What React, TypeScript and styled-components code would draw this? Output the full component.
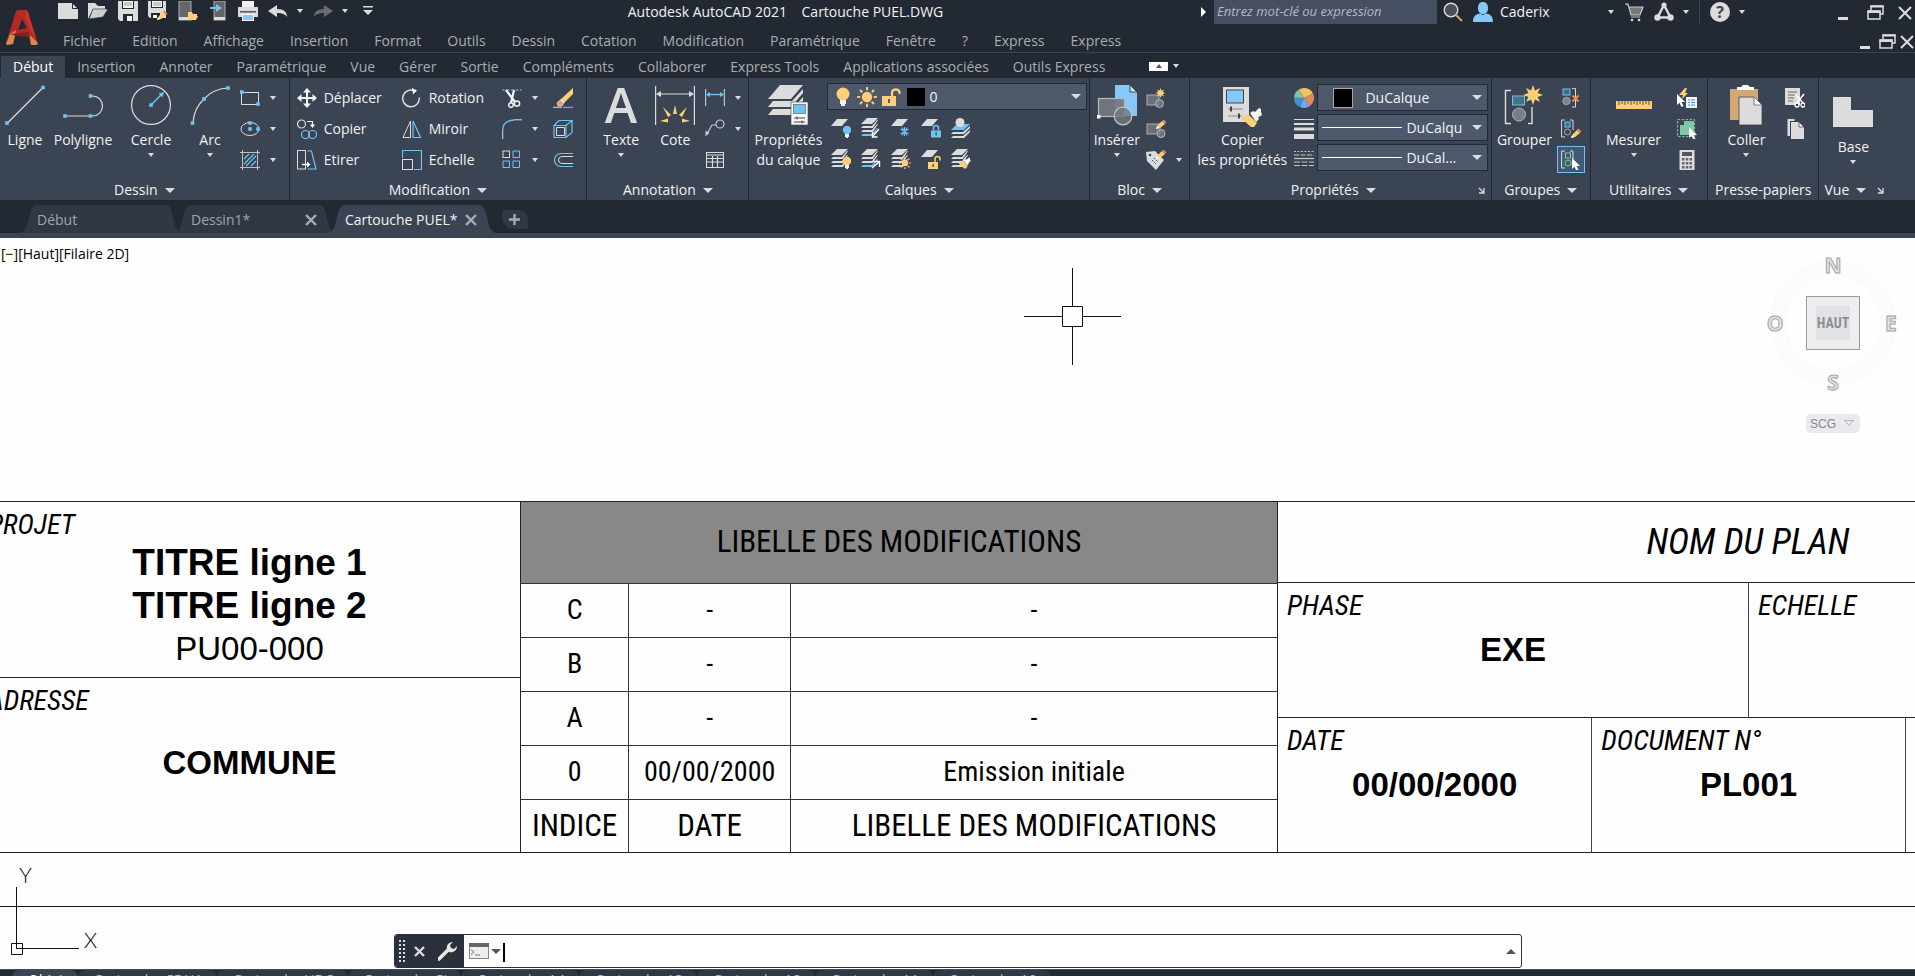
import React from "react";
import styled, { createGlobalStyle, css } from "styled-components";

const c = {
  dark: "#222932",
  ribbon: "#3b4453",
  tab: "#303845",
  field: "#4d586b",
  light: "#dcdcdc",
  blue: "#6fc3f3",
  sky: "#86c8f8",
  yellow: "#ffcf78",
  orange: "#e58a55",
  green: "#7fc8a4",
};

const Global = createGlobalStyle`
  * { box-sizing: border-box; }
  body { margin: 0; background: #fefefe; overflow: hidden; }
  button, input, select { font: inherit; color: inherit; background: none; border: 0; padding: 0; margin: 0; outline: none; }
`;

/* ---------- drawings ---------- */

const Dot = ({ x, y }: { x: number; y: number }) => (
  <rect x={x - 1.8} y={y - 1.8} width="3.6" height="3.6" fill={c.blue} />
);
const Sheet = ({ x, y, fill = c.light }: { x: number; y: number; fill?: string }) => (
  <path d={`M${x + 6} ${y}h11l-6 7H${x}z`} fill={fill} />
);
const Stack = ({ bottom = c.light }: { bottom?: string }) => (
  <>
    <path d="M6 0h11l-6 6H0z" fill={c.light} />
    <path d="M2 8h9l5-6h1l-5 8H0z" fill={c.light} />
    <path d="M2 12h9l5-6h1l-5 8H0z" fill={c.light} />
    <path d="M2 16h9l5-6h1l-5 8H0z" fill={bottom} />
  </>
);
const Bulb = ({ x, y, fill = c.yellow }: { x: number; y: number; fill?: string }) => (
  <>
    <circle cx={x} cy={y} r="4.2" fill={fill} />
    <path d={`M${x - 2} ${y + 4}h4v3h-1v1.5h-2v-1.500h-1z`} fill="#f2f2f2" />
  </>
);
const Pencil = ({ x, y, k = 1 }: { x: number; y: number; k?: number }) => (
  <g transform={`translate(${x} ${y}) scale(${k})`}>
    <path d="M0 9l2-4 4-4 3 3-5 4z" fill={c.yellow} />
    <path d="M6 1l1.500-1.500 3 3L9 4z" fill={c.orange} />
    <path d="M0 9l1-3 2 2z" fill="#fff" />
  </g>
);
const Pointer = ({ x, y }: { x: number; y: number }) => (
  <path d={`M${x} ${y}v11l2.500-2.200 2 4.200 2-1-2-4h3.500z`} fill="#fff" />
);
const Star = ({ x, y, r }: { x: number; y: number; r: number }) => {
  const pts = Array.from({ length: 16 }, (_, i) => {
    const a = (i * Math.PI) / 8;
    const q = i % 2 ? r * 0.5 : r;
    return `${x + q * Math.sin(a)},${y - q * Math.cos(a)}`;
  }).join(" ");
  return <polygon points={pts} fill={c.yellow} />;
};
const Sun = ({ x, y, r }: { x: number; y: number; r: number }) => (
  <>
    <circle cx={x} cy={y} r={r * 0.6} fill={c.yellow} />
    {Array.from({ length: 8 }, (_, i) => (
      <line key={i} x1={x} x2={x} y1={y - r * 1.15} y2={y - r * 0.78} stroke={c.yellow} strokeWidth={r * 0.22} transform={`rotate(${i * 45} ${x} ${y})`} />
    ))}
  </>
);
const Padlock = ({ x, y, fill, open }: { x: number; y: number; fill: string; open?: boolean }) => (
  <>
    <rect x={x} y={y} width="10" height="7" fill={fill} />
    <path d={open ? `M${x + 7} ${y}v-3a2.500 2.500 0 0 1 5 0v1.500` : `M${x + 2.5} ${y}v-2.500a2.500 2.500 0 0 1 5 0v2.500`} fill="none" stroke={fill} strokeWidth="1.500" />
    <rect x={x + 4.5} y={y + 2} width="1.300" height="3" fill={c.ribbon} />
  </>
);
const Brush = ({ x, y, k = 1 }: { x: number; y: number; k?: number }) => (
  <g transform={`translate(${x} ${y}) scale(${k})`}>
    <path d="M8 4l3-2 2 1 4-4 2 1v3l1 2-1 2-3 1 1 2-3 3z" fill="#f4f4f4" />
    <path d="M-1 9l7-4 9 9-3 4h-3z" fill={c.yellow} />
  </g>
);

const glyphs: Record<string, React.ReactNode> = {
  /* quick access bar */
  new: <><path d="M0 2h14l6 6v10H0z" fill={c.light} /><path d="M14.500 2v5.500H20" fill="none" stroke={c.dark} /></>,
  open: <><path d="M0 18V2h7l3 3h7v3H5z" fill={c.light} /><path d="M5 8h15l-5 8-14 2z" fill="#cfcfcf" stroke={c.dark} strokeWidth=".6" /></>,
  save: <><path d="M0 0h20v20H2l-2-2z" fill={c.light} /><path d="M4 0h12v8H4zM5 13h10v7H5z" fill={c.dark} /><path d="M5 0h10v7H5zM9 15h5v5H9z" fill="#f4f4f4" /><path d="M6 2h8M6 4h8" stroke="#888" strokeWidth=".8" /></>,
  saveas: <><path d="M0 0h18v17H2l-2-2z" fill={c.light} /><path d="M3 0h12v7H3zM3 12h9v5H3z" fill={c.dark} /><path d="M4 0h10v6H4zM5 14h4v3H5z" fill="#f4f4f4" /><path d="M5 2h8M5 4h8" stroke="#888" strokeWidth=".8" /><Pencil x={9} y={10} /></>,
  openm: <><rect x="1" width="12" height="19" fill="#666" stroke="#aaa" /><rect x="1" y="16" width="12" height="3" fill={c.light} /><path d="M10 19v-8h4l1 2h4v2h1l-2 4z" fill={c.yellow} /></>,
  savem: <><rect x="6" width="11" height="19" fill="#666" stroke="#aaa" /><rect x="6" y="16" width="11" height="3" fill={c.light} /><path d="M2 6h6V3l6 4-6 4V8H2z" fill={c.blue} /></>,
  print: <><path d="M4 0h12v6H4z" fill="#f2f2f2" /><path d="M0 6h20v10H0z" fill={c.light} /><path d="M2 10h16v1.500H2z" fill="#555" /><path d="M4 13h12v7H4z" fill="#f5f5f5" /><path d="M5 14h10v5H5z" fill={c.sky} /></>,
  undo: <path d="M0 10l9-6v4c7 0 10 3 10 8-2-3-5-4-10-4v4z" fill={c.light} />,
  redo: <path d="M20 10l-9-6v4C4 8 1 11 1 16c2-3 5-4 10-4v4z" fill="#6b6d70" />,
  more: <><path d="M5 5h10v1.500H5z" fill={c.light} /><path d="M5 9h10l-5 5z" fill={c.light} /></>,
  search: <><circle cx="8" cy="8" r="6.800" fill="#4c5054" stroke={c.light} strokeWidth="1.400" /><path d="M13 13l6 6" stroke="#d9a066" strokeWidth="2" /></>,
  user: <><path d="M10 0c3 0 5 2 5 6s-2 6-5 6-5-2-5-6 2-6 5-6z" fill={c.sky} /><path d="M0 20c0-6 3-8 7-8.500l3 1.500 3-1.500c4 .5 7 2.500 7 8.500z" fill={c.sky} /></>,
  cart: <><path d="M1 2h3l3 11h9l3-8H5" fill="#777" stroke="#c9c9c9" strokeWidth="1.200" /><path d="M7 15h9" stroke="#c9c9c9" /><circle cx="8" cy="18" r="1.300" fill={c.light} /><circle cx="15" cy="18" r="1.300" fill={c.light} /></>,
  tri: <><path d="M10 3L3.500 15.500h13z" fill="none" stroke={c.light} strokeWidth="2.400" /><circle cx="10" cy="3" r="2.600" fill={c.light} /><circle cx="3.500" cy="15.500" r="3.200" fill={c.light} /><circle cx="16.500" cy="15.500" r="3.200" fill={c.light} /></>,
  min: <path d="M3 15h10v3H3z" fill={c.light} />,
  restore: <><path d="M6 8V4h12v8h-3" fill="none" stroke={c.light} strokeWidth="1.500" /><path d="M5.500 3.500H18.500v2H5.500z" fill={c.light} /><rect x="3" y="9" width="12" height="8" fill="none" stroke={c.light} strokeWidth="1.500" /><path d="M2.500 8.500h13v2.500h-13z" fill={c.light} /></>,
  close: <path d="M4 5l12 12M16 5L4 17" stroke={c.light} strokeWidth="2" />,
  /* draw */
  rect: <><rect x="1.500" y="4.500" width="17" height="12" fill="none" stroke={c.light} /><Dot x={1.8} y={4} /><Dot x={18} y={16} /></>,
  ellipse: <><ellipse cx="10" cy="10" rx="9" ry="6.500" fill="none" stroke={c.light} /><Dot x={10} y={4} /><Dot x={10} y={10} /><Dot x={18} y={10} /></>,
  hatch: <><path d="M0 2.500h20M0 17.500h20M2.500 0v20M17.500 0v20" stroke="#c0c0c0" /><path d="M4 9l5-5M4 14L14 4M6 16L16 6M11 16l5-5" stroke={c.blue} strokeWidth="1.200" /></>,
  /* modify */
  move: <><path d="M10 3v14M3 10h14" stroke="#f4f4f4" strokeWidth="2" /><path d="M10 0l4 4.500H6zM10 20l4-4.500H6zM0 10l4.500-4v8zM20 10l-4.500-4v8z" fill="#f4f4f4" /></>,
  rotate: <><path d="M11 2.500A8.300 8.300 0 1 0 17 8" fill="none" stroke={c.light} strokeWidth="1.500" transform="rotate(12 10 10)" /><path d="M10 0l5 2.500-4 4z" fill="#fff" /></>,
  copy: <><circle cx="4.500" cy="5" r="4" fill="none" stroke={c.light} strokeWidth="1.200" /><path d="M10 2.500h5.500V6" fill="none" stroke="#fff" strokeWidth="1.200" /><path d="M13 5.500h5l-2.500 3.500z" fill="#fff" /><circle cx="8.500" cy="15.500" r="4" fill="none" stroke={c.blue} strokeWidth="1.200" /><circle cx="15.500" cy="15.500" r="4" fill="none" stroke={c.blue} strokeWidth="1.200" /></>,
  mirror: <><path d="M8.500 2v16.500H1z" fill="none" stroke={c.light} /><path d="M11 2v16.500h7.500z" fill="none" stroke={c.blue} strokeWidth="1.200" /></>,
  stretch: <><rect x=".5" y=".5" width="8" height="18.500" fill="none" stroke={c.light} /><path d="M10.500 1h4l4.500 18h-8.500" fill="none" stroke={c.blue} strokeWidth="1.200" /><path d="M5 14.500h6" stroke="#fff" strokeWidth="1.400" /><path d="M10 11.500l3.500 3-3.500 3z" fill="#fff" /></>,
  scale: <><path d="M.5 8V.500h19v19H12" fill="none" stroke={c.blue} strokeWidth="1.200" /><rect x=".5" y="9.500" width="10" height="10" fill="none" stroke={c.light} /></>,
  trim: <><path d="M0 2h20" stroke={c.blue} strokeWidth="1" strokeDasharray="3 1.500" /><path d="M4 2l9 12M12 2L9 15" stroke="#f4f4f4" strokeWidth="2.200" /><circle cx="15" cy="15.500" r="2.600" fill="none" stroke="#f4f4f4" strokeWidth="1.500" /><circle cx="9" cy="17" r="2.300" fill="none" stroke="#f4f4f4" strokeWidth="1.500" /></>,
  fillet: <><path d="M.8 11C.8 5 4 1.500 12 1" fill="none" stroke={c.blue} strokeWidth="1.300" /><path d="M12 .8h8M.7 11v9" stroke={c.light} /></>,
  array: <><rect x="1" y="1" width="6.500" height="6.500" fill="none" stroke={c.light} /><path d="M11 1h6.500v6.500H11zM1 11h6.500v6.500H1zM11 11h6.500v6.500H11z" fill="none" stroke={c.blue} /></>,
  erase: <><path d="M20 0v6l-8 8-4-3z" fill={c.yellow} /><path d="M8 11l4 3-1 1-4-3z" fill="#fff" /><path d="M7 12l4 3-2 3H5l-1-3z" fill="#e9976f" stroke="#fff" strokeWidth=".6" /><path d="M0 19.300h9" stroke={c.light} /><path d="M10 19.300h10" stroke={c.blue} /></>,
  explode: <><path d="M1 6.500h12v12H1zM1 6.500l5-5h13l-6 5M19 1.500v12l-6 5" fill="none" stroke={c.blue} strokeWidth="1.200" /><path d="M3.500 8.500h8v8h-8z" fill="none" stroke={c.light} /></>,
  offset: <><path d="M20 3.500H8a6.500 6.500 0 0 0 0 13h12" fill="none" stroke={c.blue} strokeWidth="1.200" /><path d="M20 6.500H9a3.500 3.500 0 0 0 0 7h11" fill="none" stroke={c.light} /></>,
  /* annotation */
  linear: <><path d="M.7 1v17M19.300 1v17" stroke={c.light} /><path d="M2 6.500h16" stroke={c.blue} strokeWidth="1.400" /><path d="M1 6.500l4-2.500v5zM19 6.500L15 4v5z" fill={c.blue} /></>,
  leader: <><circle cx="15" cy="5" r="4" fill="none" stroke="#c8c8c8" strokeWidth="1.200" /><path d="M11 6H7L2 15" fill="none" stroke="#c8c8c8" strokeWidth="1.200" /><path d="M.5 17.500v-6l4 2.500z" fill="#c8c8c8" /></>,
  table: <><rect x="1.500" y="2.500" width="17" height="15" fill="none" stroke={c.light} /><path d="M2 5h16M2 8.500h16M2 12h16M7.500 6v11M12.500 6v11" stroke={c.light} strokeWidth="1.200" /></>,
  /* layers */
  lOff: <><Sheet x={0} y={1} /><Bulb x={16} y={12} fill={c.blue} /></>,
  lIso: <><Stack bottom={c.blue} /><path d="M18 11l-6 7M11.500 14v5h5" fill="none" stroke="#fff" strokeWidth="1.400" /></>,
  lFreeze: <><Sheet x={0} y={1} /><path d="M13.500 9v9M9.500 11l8 5M17.500 11l-8 5M11 9.500l5 8M16 9.500l-5 8" stroke={c.blue} strokeWidth="1.100" /></>,
  lLock: <><Sheet x={0} y={1} /><Padlock x={10} y={12.5} fill={c.blue} /></>,
  lMake: <><path d="M6 6h13l-6 6H0z" fill={c.blue} /><circle cx="9" cy="4.500" r="4.500" fill={c.light} /><path d="M2 14h10l7-6v2l-6 6H0zM2 18h10l7-6v2l-6 6H0z" fill={c.light} /></>,
  lOn: <><Stack /><Bulb x={16} y={12} /></>,
  lUniso: <><Stack bottom={c.blue} /><path d="M11 19l7-6M13 12.500h5.500V18" fill="none" stroke="#fff" strokeWidth="1.400" /></>,
  lThaw: <><Stack /><Sun x={14} y={14} r={5.4} /></>,
  lUnlock: <><Sheet x={0} y={1} /><Padlock x={7} y={13} fill={c.yellow} open /></>,
  lMatch: <><Stack /><Brush x={8} y={9} k={0.58} /></>,
  bulbBig: <><circle cx="10" cy="7" r="6.500" fill={c.yellow} /><path d="M7 13h6v4h-1v2H8v-2H7z" fill="#f2f2f2" /></>,
  sun: <Sun x={10} y={10} r={8.6} />,
  unlock: <><path d="M1 9h14v10H1z" fill={c.yellow} /><path d="M11 9V5a4 4 0 0 1 7.500 0v2" fill="none" stroke={c.yellow} strokeWidth="2.200" /><path d="M7 12h2v4H7z" fill={c.field} /></>,
  /* block */
  blkNew: <><rect x="1" y="7" width="12" height="10" fill="#6b6f78" stroke="#aeb0b4" /><circle cx="13.500" cy="15.500" r="4" fill="#7a7e86" fillOpacity=".8" stroke="#b8b8b8" /><Star x={14.5} y={5} r={5} /></>,
  blkEdit: <><rect x="1" y="5" width="13" height="10" fill="#6b6f78" stroke="#aeb0b4" /><circle cx="15" cy="14.500" r="4" fill="#7a7e86" fillOpacity=".8" stroke="#b8b8b8" /><Pencil x={10} y={1} /></>,
  blkAttr: <><path d="M0 2l9-1 9 9-8 10L1 11z" fill={c.light} /><circle cx="4" cy="5" r="1.300" fill={c.ribbon} /><path d="M6 10l4 4M8 8l4 4" stroke={c.ribbon} strokeDasharray="1.500 1" /><Pencil x={10} y={0} /></>,
  /* properties */
  wheel: <><path d="M10 10V0a10 10 0 0 1 9 5.500z" fill="#f2c063" /><path d="M10 10l9-4.500a10 10 0 0 1-3.500 12.800z" fill="#e2875a" /><path d="M10 10l5.500 8.300a10 10 0 0 1-9.500.7z" fill="#74a7ee" /><path d="M10 10l-4 9A10 10 0 0 1 0 9.500z" fill="#3f93cf" /><path d="M10 10L0 9.500A10 10 0 0 1 5 1.500z" fill="#7ec5a3" /><path d="M10 10L5 1.500A10 10 0 0 1 10 0z" fill="#f2c063" /></>,
  weights: <path d="M0 0h20v1H0zM0 4h20v2H0zM0 8.500h20v3H0zM0 15h20v5H0z" fill={c.light} />,
  types: <><path d="M0 1.500h20" stroke="#c4c4c4" strokeDasharray="2 1.500" /><path d="M0 5h20" stroke="#c4c4c4" strokeDasharray="5 1.500" /><path d="M0 8.500h20" stroke="#c4c4c4" strokeWidth="1.300" /><path d="M0 12h20M0 15.500h20" stroke="#c4c4c4" strokeDasharray="6 1.500" /></>,
  /* groups */
  ungroup: <><rect x="2" y="1" width="7" height="6" fill="#3e6d85" stroke={c.blue} /><circle cx="5.500" cy="13" r="3.700" fill="#7d8088" stroke="#a9a9a9" /><path d="M11 .600h3.500V19H11" fill="none" stroke={c.light} /><path d="M11.500 7.500l6 6M17.500 7.500l-6 6" stroke={c.orange} strokeWidth="2" /></>,
  grpEdit: <><path d="M4 1H.600v17H4M9 1h3v10" fill="none" stroke={c.light} /><rect x="4" y="3" width="5" height="5" fill="#3e6d85" stroke={c.blue} /><circle cx="6.500" cy="13" r="3" fill="none" stroke="#a9a9a9" /><Pencil x={10} y={10} /></>,
  grpSel: <><path d="M4 1H.600v17H4M9 1h3v8" fill="none" stroke={c.light} /><rect x="4.500" y="3" width="5" height="5" fill="none" stroke={c.green} /><circle cx="7" cy="13" r="3" fill="none" stroke={c.green} /><Pointer x={11} y={8} /></>,
  /* utilities */
  quick: <><path d="M8 0L2 7h4l-1 4 6-6H8l2-5z" fill={c.yellow} /><Pointer x={0} y={6} /><rect x="9" y="9" width="11" height="11" fill="#f4f4f4" /><path d="M11 12h2M14 12h4M11 14.500h2M14 14.500h4M11 17h2M14 17h4" stroke="#3f93cf" strokeWidth="1.200" /></>,
  selAll: <><rect x=".6" y=".6" width="17" height="17" fill="none" stroke={c.green} strokeDasharray="2.500 1.500" /><path d="M3 6h4V2h10v10h-4v4H3z" fill={c.green} /><Pointer x={12} y={8} /></>,
  calc: <><rect x="2.500" width="15" height="20" fill={c.light} /><path d="M5 2h10v4H5z" fill="#555" /><path d="M5 8h2.500v2.500H5zM8.800 8h2.500v2.500H8.800zM12.500 8H15v2.500h-2.500zM5 12h2.500v2.500H5zM8.800 12h2.500v2.500H8.800zM12.500 12H15v2.500h-2.500zM5 16h2.500v2.500H5zM8.800 16h2.500v2.500H8.800zM12.500 16H15v2.500h-2.500z" fill="#666" /></>,
  cut: <><path d="M0 0h15v17H0z" fill={c.light} /><path d="M3 4h9M3 7h9M3 10h6M3 13h5" stroke="#666" /><path d="M10 6l8 9M19 6l-7 9" stroke="#fff" strokeWidth="1.600" /><circle cx="12" cy="17" r="2" fill={c.ribbon} stroke="#fff" strokeWidth="1.300" /><circle cx="18" cy="17" r="2" fill={c.ribbon} stroke="#fff" strokeWidth="1.300" /></>,
  copyClip: <><path d="M2.500 0h7v2H5v15H2.500z" fill={c.light} /><path d="M6 3h8l5 5v12H6z" fill={c.light} /><path d="M14 3v5h5z" fill="#fff" stroke={c.ribbon} strokeWidth=".8" /></>,
};

const bigGlyphs: Record<string, React.ReactNode> = {
  ligne: <><path d="M1.500 39L38 2.500" stroke={c.light} strokeWidth="1.200" /><Dot x={2} y={38} /><Dot x={38} y={2.5} /></>,
  polyligne: <><path d="M1.500 31H29.500A10 10 0 0 0 29.500 11H27" fill="none" stroke={c.light} strokeWidth="1.200" /><Dot x={2} y={31} /><Dot x={27.5} y={31} /><Dot x={27.5} y={11} /></>,
  cercle: <><circle cx="20" cy="20" r="19.400" fill="none" stroke={c.light} strokeWidth="1.200" /><path d="M20 20l10-10" stroke={c.blue} strokeWidth="1.500" /><path d="M33 7l-1.500 5.500-4-4z" fill={c.blue} /><Dot x={20} y={20} /></>,
  arc: <><path d="M3 38Q4 23 14 14Q23 4 37.500 3" fill="none" stroke={c.light} strokeWidth="1.200" /><Dot x={2.5} y={38} /><Dot x={14} y={14} /><Dot x={38} y={3} /></>,
  texte: <text x="20" y="38" fontSize="49" fontWeight="600" textAnchor="middle" fill={c.light}>A</text>,
  cote: <><path d="M.600 1v39M39.400 1v39" stroke={c.light} strokeWidth="1.200" /><path d="M2 9h36" stroke={c.light} /><path d="M1 9l5-3v6zM39 9l-5-3v6z" fill={c.light} /><path d="M20 20l2 9h-4zM8 22l8 8-3 2zM32 22l-8 8 3 2zM5 36l8-2.500v4zM35 36l-8-2.500v4z" fill={c.yellow} /></>,
  calques: <><path d="M12 0h23L23 14H0z" fill={c.light} /><path d="M5 16h19L35 4v4L23 22H0z" fill={c.light} /><path d="M5 24h19l11-12v4L23 30H0z" fill={c.light} /><rect x="23" y="17" width="17" height="23" fill="#f6f6f6" stroke={c.ribbon} strokeWidth=".6" /><rect x="25.500" y="19.500" width="12" height="9" fill={c.blue} stroke="#555" strokeWidth=".6" /><path d="M26 33h11M26 37h11M29 31.500v3M34 35.500v3" stroke="#444" /></>,
  inserer: <><path d="M18 0h15l7 7v24H18z" fill={c.sky} /><path d="M33 0v7h7z" fill="#c9ecf0" stroke={c.ribbon} /><rect x="1.500" y="13.500" width="26" height="18" fill="#747880" fillOpacity=".93" stroke="#b8b8b8" strokeWidth="1.200" /><circle cx="26" cy="31" r="8.800" fill="#747880" fillOpacity=".8" stroke="#c4c4c4" strokeWidth="1.200" /><rect y="30" width="3.500" height="3.500" fill="#fff" /></>,
  copierProps: <><rect x="1" y="2" width="26" height="35" fill={c.light} /><rect x="4.500" y="5" width="17" height="13" fill={c.sky} stroke="#444" /><path d="M6 24h15M6 31h14" stroke="#888" /><path d="M9 21.500v5M17 28.500v5" stroke="#444" strokeWidth="2" /><Brush x={20} y={24} /></>,
  grouper: <><path d="M7 5.500H1.500v33H7M24 38.500h4V22" fill="none" stroke={c.light} strokeWidth="1.400" /><rect x="8.500" y="11" width="12" height="9" fill="#4a7180" stroke={c.blue} /><circle cx="15" cy="29.500" r="6.500" fill="#7a7d85" stroke="#b4b4b4" /><Star x={29} y={10} r={10} /></>,
  mesurer: <><rect x="2" y="16" width="36" height="8" fill={c.yellow} /><path d="M5 16v4M8 16v3M11 16v4M14 16v3M17 16v4M20 16v3M23 16v4M26 16v3M29 16v4M32 16v3M35 16v4" stroke="#5b5140" /></>,
  coller: <><path d="M4 4h28v31H4z" fill="#d3a873" /><path d="M11 5V2h4l2-2h5l2 2h4v3z" fill="#fff" /><path d="M13 12h15l8 8v20H13z" fill={c.light} stroke={c.ribbon} strokeWidth=".8" /><path d="M28 12v8h8z" fill="#fff" stroke="#666" strokeWidth=".8" /></>,
  base: <path d="M0 8h18v13h22v17H0z" fill={c.light} />,
};

const Glyph = ({ name }: { name: string }) => (
  <svg width="20" height="20" viewBox="0 0 20 20" aria-hidden="true">{glyphs[name]}</svg>
);
const BigGlyph = ({ name }: { name: string }) => (
  <svg width="40" height="42" viewBox="0 -1 40 42" aria-hidden="true">{bigGlyphs[name]}</svg>
);

const Caret = styled.i<{ $wide?: boolean }>`
  display: block;
  flex: none;
  border: solid transparent;
  border-width: ${(p) => (p.$wide ? "5px 5px 0" : "4px 3px 0")};
  border-top-color: ${c.light};
`;

/* ---------- header ---------- */

const Page = styled.div`
  display: flex;
  flex-direction: column;
  height: 100vh;
  overflow: hidden;
  font-family: "Open Sans", "Noto Sans", sans-serif;
  font-size: 14px;
  line-height: 20px;
  color: #f2f2f2;
`;
const Header = styled.header`
  display: flex;
  background: ${c.dark};
  border-bottom: 1px solid ${c.ribbon};
`;
const LogoButton = styled.button`
  flex: 0 0 50px;
  padding: 3px 0 0 6px;
  text-align: left;
  line-height: 0;
`;
const HeaderRows = styled.div`
  flex: 1;
  min-width: 0;
`;
const TitleRow = styled.div`
  display: flex;
  align-items: center;
  height: 24px;
  padding-left: 8px;
`;
const Quick = styled.div`
  display: flex;
  gap: 10px;
  align-items: center;
  margin-top: -2px;
`;
const IconButton = styled.button`
  display: flex;
  align-items: center;
  gap: 9px;
  line-height: 0;
`;
const Title = styled.h1`
  flex: 1;
  margin: 0;
  padding-right: 8px;
  text-align: center;
  font-size: 14px;
  font-weight: 400;
  line-height: 20px;
  white-space: pre;
`;
const SearchArrow = styled.i`
  border: solid transparent;
  border-width: 5px 0 5px 5px;
  border-left-color: #fff;
  margin-right: 8px;
`;
const Search = styled.input`
  width: 223px;
  height: 24px;
  padding: 0 3px 2px;
  background: #454f61;
  font-size: 13px;
  font-style: italic;
  &::placeholder { color: #b5bac2; opacity: 1; }
`;
const Account = styled.div`
  display: flex;
  align-items: center;
  padding: 0 6px;
  gap: 10px;
`;
const UserButton = styled.button`
  display: flex;
  align-items: center;
  gap: 7px;
  width: 141px;
  & > i { margin-left: auto; }
`;
const HelpMark = styled.span`
  width: 20px;
  height: 20px;
  border-radius: 50%;
  background: ${c.light};
  color: #444;
  font-size: 16px;
  font-weight: 700;
  line-height: 20px;
  text-align: center;
`;
const Rule = styled.span`
  width: 1px;
  height: 22px;
  background: ${c.ribbon};
`;
const WindowButtons = styled.div<{ $inner?: boolean }>`
  display: flex;
  gap: ${(p) => (p.$inner ? "0" : "10px")};
  margin-left: ${(p) => (p.$inner ? "auto" : "84px")};
  ${(p) => p.$inner && css`margin-right: -2px;`}
`;
const MenuRow = styled.nav`
  display: flex;
  align-items: center;
  height: 28px;
  padding: 5px 0 0 13px;
  gap: 26px;
  color: #a9adb3;
`;
const MenuLink = styled.a`
  color: inherit;
  text-decoration: none;
  white-space: nowrap;
`;
const RibbonTabs = styled.div`
  display: flex;
  align-items: flex-end;
  height: 25px;
  background: ${c.dark};
  color: #a9adb3;
`;
const RibbonTab = styled.button<{ $on?: boolean }>`
  height: 22px;
  padding: 0 12px;
  white-space: nowrap;
  ${(p) => p.$on && css`background: ${c.ribbon}; color: #fff; margin-left: 1px; border-radius: 2px 2px 0 0;`}
`;
const Minimise = styled.button`
  display: flex;
  align-items: center;
  gap: 5px;
  height: 22px;
  padding-bottom: 2px;
  margin-left: 32px;
  & > span {
    display: flex;
    justify-content: center;
    align-items: center;
    width: 19px;
    height: 9px;
    background: #fff;
  }
  & > span > i { border: solid transparent; border-width: 0 3px 4px; border-bottom-color: #555; }
`;

/* ---------- ribbon ---------- */

const Ribbon = styled.div`
  display: flex;
  height: 122px;
  background: ${c.ribbon};
`;
const PanelBox = styled.section<{ $w: number }>`
  flex: ${(p) => p.$w} 1 0;
  min-width: 0;
  display: flex;
  flex-direction: column;
  border-right: 1px solid ${c.dark};
  &:last-child { border-right: 0; }
`;
const PanelBody = styled.div<{ $pad?: number }>`
  display: flex;
  flex: 1;
  padding-left: ${(p) => p.$pad ?? 0}px;
`;
const PanelTitle = styled.div<{ $start?: boolean; $far?: boolean }>`
  display: flex;
  align-items: center;
  justify-content: ${(p) => (p.$start ? "flex-start" : "center")};
  gap: 7px;
  height: 20px;
  padding: 0 ${(p) => (p.$far ? 20 : 5)}px 0 5px;
  white-space: nowrap;
`;
const Launcher = styled.button<{ $far?: boolean }>`
  line-height: 0;
  ${(p) => (p.$far ? css`position: absolute; right: 6px;` : css`margin-left: 4px;`)}
`;
const TitleWrap = styled.div`
  position: relative;
  & > button { top: 7px; }
`;
const BigButton = styled.button<{ $w: number; $low?: boolean }>`
  flex: 0 0 ${(p) => p.$w}px;
  display: flex;
  flex-direction: column;
  align-items: center;
  padding-top: ${(p) => (p.$low ? 10 : 6)}px;
  line-height: 20px;
  white-space: nowrap;
  & > svg { flex: none; margin-bottom: ${(p) => (p.$low ? 7 : 4)}px; overflow: visible; }
  & > i { margin-top: 3px; }
`;
const Column = styled.div<{ $w?: number; $pad?: number }>`
  display: grid;
  grid-auto-rows: 31px;
  align-content: start;
  padding: 4px 0 0 ${(p) => p.$pad ?? 0}px;
  flex: 0 0 ${(p) => (p.$w ? p.$w + "px" : "auto")};
`;
const Tool = styled.button<{ $on?: boolean }>`
  display: flex;
  align-items: center;
  gap: ${(p) => (p.$on === undefined ? 7 : 0)}px;
  white-space: nowrap;
  & > svg { flex: none; }
  & > i { margin-left: 3px; }
  ${(p) => p.$on && css`
    justify-self: start;
    align-self: center;
    height: 27px;
    padding: 0 4px;
    margin-left: -4px;
    background: #435873;
    box-shadow: inset 0 0 0 1px ${c.blue};
  `}
`;
const Combo = styled.div`
  display: flex;
  align-items: center;
  gap: 4px;
  height: 27px;
  padding: 0 5px;
  background: ${c.field};
  border: 1px solid ${c.dark};
  & > select { flex: 1; min-width: 0; appearance: none; height: 25px; }
`;
const LayerArea = styled.div`
  flex: 1;
  min-width: 0;
  padding: 5px 2px 0 0;
`;
const LayerGrid = styled.div`
  display: grid;
  grid-template-columns: repeat(5, 30px);
  grid-auto-rows: 31px;
  padding: 2px 0 0 4px;
`;
const Swatch = styled.span<{ $framed?: boolean }>`
  flex: none;
  width: ${(p) => (p.$framed ? 20 : 18)}px;
  height: ${(p) => (p.$framed ? 20 : 18)}px;
  margin-left: 2px;
  background: #000;
  ${(p) => p.$framed && css`border: 1px solid #a8a8a8; margin: 0 8px 0 10px;`}
`;
const LineSample = styled.span`
  flex: none;
  width: 80px;
  height: 1px;
  background: #fff;
  margin-left: -1px;
`;
const PropCombos = styled.div`
  flex: 1;
  min-width: 0;
  display: flex;
  flex-direction: column;
  gap: 3px;
  padding: 6px 3px 0 0;
`;

type ToolDef = { icon: string; label?: string; name?: string; menu?: boolean; on?: boolean };
const Tools = ({ items, w, pad }: { items: ToolDef[]; w?: number; pad?: number }) => (
  <Column $w={w} $pad={pad}>
    {items.map((t) => (
      <Tool key={t.icon} $on={t.on} aria-label={t.label ? undefined : t.name}>
        <Glyph name={t.icon} />
        {t.label}
        {t.menu && <Caret />}
      </Tool>
    ))}
  </Column>
);
const Big = ({ icon, lines, w, menu, low }: { icon: string; lines: string[]; w: number; menu?: boolean; low?: boolean }) => (
  <BigButton $w={w} $low={low}>
    <BigGlyph name={icon} />
    {lines.map((l) => <span key={l}>{l}</span>)}
    {menu && <Caret />}
  </BigButton>
);
const LaunchMark = () => (
  <svg width="7" height="7" viewBox="0 0 7 7" aria-hidden="true"><path d="M1 1l4 4M6 1v5H1" fill="none" stroke={c.light} strokeWidth="1.300" /></svg>
);
const Panel = ({ title, w, pad, plain, start, launch, children }: { title: string; w: number; pad?: number; plain?: boolean; start?: boolean; launch?: "far" | "near"; children: React.ReactNode }) => (
  <PanelBox $w={w}>
    <PanelBody $pad={pad}>{children}</PanelBody>
    <TitleWrap>
      <PanelTitle $start={start} $far={launch === "far"}>
        {title}
        {!plain && <Caret $wide />}
        {launch === "near" && <Launcher aria-label="Options"><LaunchMark /></Launcher>}
      </PanelTitle>
      {launch === "far" && <Launcher $far aria-label="Options"><LaunchMark /></Launcher>}
    </TitleWrap>
  </PanelBox>
);

/* ---------- file tabs ---------- */

const FileTabs = styled.nav`
  display: flex;
  align-items: flex-end;
  height: 38px;
  padding-left: 20px;
  background: ${c.dark};
  border-bottom: 5px solid ${c.ribbon};
`;
const FileTabBox = styled.div<{ $on?: boolean }>`
  display: flex;
  height: 28px;
  margin-right: -8px;
  position: relative;
  z-index: ${(p) => (p.$on ? 1 : 0)};
  color: ${(p) => (p.$on ? "#f4f4f4" : "#a0a5ac")};
  & > svg { flex: none; fill: ${(p) => (p.$on ? c.ribbon : c.tab)}; }
`;
const FileTabBody = styled.div<{ $on?: boolean }>`
  display: flex;
  align-items: center;
  justify-content: space-between;
  gap: 7px;
  min-width: 128px;
  padding: 2px 2px 0 0;
  background: ${(p) => (p.$on ? c.ribbon : c.tab)};
  white-space: nowrap;
  & > button { line-height: 0; }
`;
const Edge = ({ right }: { right?: boolean }) => (
  <svg width="17" height="28" viewBox="0 0 17 28" aria-hidden="true">
    <path d={right ? "M0 0c5 0 6 4 8 12 2 9 3 14 9 16H0z" : "M17 0c-5 0-6 4-8 12-2 9-3 14-9 16h17z"} />
  </svg>
);
const AddTab = styled.button`
  width: 26px;
  height: 19px;
  margin: 0 0 4px 14px;
  border-radius: 4px 10px 2px 12px;
  background: ${c.tab};
  line-height: 0;
`;
const FileTab = ({ label, on, closable }: { label: string; on?: boolean; closable?: boolean }) => (
  <FileTabBox $on={on}>
    <Edge />
    <FileTabBody $on={on}>
      <MenuLink href="#">{label}</MenuLink>
      {closable && (
        <button aria-label={`Fermer ${label}`}>
          <svg width="12" height="12" viewBox="0 0 12 12" aria-hidden="true"><path d="M1 1l10 10M11 1L1 11" stroke="#a9adb3" strokeWidth="2.400" /></svg>
        </button>
      )}
    </FileTabBody>
    <Edge right />
  </FileTabBox>
);

/* ---------- drawing area ---------- */

const Canvas = styled.main`
  position: relative;
  flex: 1;
  min-height: 0;
  overflow: hidden;
  background: #fefefe;
  color: #000;
`;
const ViewLabel = styled.div`
  height: 263px;
  padding: 6px 0 0 1px;
`;
const Crosshair = styled.svg`
  position: absolute;
  left: calc(56% - 48px);
  top: 30px;
`;
const ViewCube = styled.svg`
  position: absolute;
  right: 0;
  top: 0;
`;
const TitleBlock = styled.div`
  display: grid;
  grid-template-columns: 541fr 757fr 941fr;
  height: 352px;
  margin: 0 -303px 0 -21px;
  border: 1px solid #222;
  border-width: 1px 0;
  font-family: "Roboto Condensed", "Liberation Sans", Arial, sans-serif;
`;
const LeftCells = styled.div`
  display: grid;
  grid-template-rows: 1fr 1fr;
`;
const RightCells = styled.div`
  display: grid;
  grid-template-columns: repeat(6, minmax(0, 1fr));
  grid-template-rows: 81px 135px 1fr;
  border-left: 1px solid #222;
`;
const Cell = styled.div<{ $span?: number; $divider?: boolean; $rule?: boolean }>`
  grid-column: span ${(p) => p.$span ?? 1};
  padding: 7px 9px 0;
  ${(p) => p.$rule && css`border-bottom: 1px solid #222;`}
  ${(p) => p.$divider && css`border-left: 1px solid #444;`}
`;
const Caption = styled.div`
  font-size: 28px;
  line-height: 32px;
  font-style: italic;
  white-space: nowrap;
`;
const Value = styled.div<{ $size?: number; $gap?: number; $plain?: boolean }>`
  margin-top: ${(p) => p.$gap ?? 0}px;
  font-family: "Liberation Sans", Arial, sans-serif;
  font-size: ${(p) => p.$size ?? 33}px;
  line-height: 43px;
  font-weight: ${(p) => (p.$plain ? 400 : 700)};
  text-align: center;
  white-space: nowrap;
`;
const PlanName = styled(Cell)`
  display: flex;
  align-items: center;
  justify-content: center;
  padding: 0;
  font-size: 36px;
  font-style: italic;
`;
const Revisions = styled.table`
  width: 100%;
  height: 100%;
  border-collapse: collapse;
  border-left: 1px solid #222;
  table-layout: fixed;
  font-size: 28px;
  line-height: 34px;
  text-align: center;
  th, td { padding: 0; font-weight: 400; height: 54px; border: 1px solid #333; }
  th { font-size: 31px; }
  thead th { height: 81px; background: #888; }
  thead tr > *, tbody tr > * { border-top: 0; }
  tfoot tr > * { border-bottom: 0; }
  tr > *:first-child { border-left: 0; }
  tr > *:last-child { border-right: 0; }
`;
const SheetEdge = styled.hr`
  margin: 53px 0 0;
  border: 0;
  border-top: 1px solid #1a1a1a;
`;
const Ucs = styled.svg`
  position: absolute;
  left: 0;
  bottom: 4px;
`;
const CommandLine = styled.div`
  position: absolute;
  left: 0;
  right: 0;
  bottom: 1px;
  margin: 0 auto;
  width: 59%;
  max-width: 1128px;
  height: 34px;
  display: flex;
  align-items: center;
  border: 1px solid #2b303d;
  border-radius: 3px;
  background: #fff;
  overflow: hidden;
  & > input { flex: 1; height: 30px; color: #000; }
`;
const CommandHandle = styled.div`
  display: flex;
  align-items: center;
  gap: 9px;
  width: 69px;
  height: 32px;
  padding-left: 4px;
  background: #2b303d;
  & > button { line-height: 0; }
  & > button + button { margin-left: 4px; }
`;
const Prompt = styled.button`
  display: flex;
  align-items: center;
  gap: 2px;
  margin-left: 5px;
  & > i { border-top-color: #555; }
`;
const TextCaret = styled.span`
  width: 2px;
  height: 19px;
  margin: 2px 4px 0 2px;
  background: #000;
`;
const History = styled.button`
  margin-right: 5px;
  border: solid transparent;
  border-width: 0 5px 5px;
  border-bottom-color: #555;
`;
const LayoutTabs = styled.nav`
  display: flex;
  flex: none;
  height: 28px;
  margin-bottom: -21px;
  padding-left: 12px;
  background: ${c.dark};
  border-top: 1px solid #454c5a;
`;
const LayoutTab = styled.a<{ $on?: boolean }>`
  padding: 0 14px 0 16px;
  line-height: 20px;
  color: ${(p) => (p.$on ? "#fff" : "#b4b8be")};
  background: ${(p) => (p.$on ? c.ribbon : c.tab)};
  border-radius: 8px 8px 0 0;
  text-decoration: none;
  white-space: nowrap;
`;

const compass: [string, number, number][] = [["N", 82, 35], ["O", 24, 93], ["E", 140, 93], ["S", 82, 152]];
const revisions = [["C", "-", "-"], ["B", "-", "-"], ["A", "-", "-"], ["0", "00/00/2000", "Emission initiale"]];

export default function App() {
  return (
    <Page>
      <Global />
      <Header>
        <LogoButton aria-label="Menu de l'application">
          <svg width="32" height="37" viewBox="0 0 32 37" aria-hidden="true">
            <path d="M10 2l2-1h8l2 2 10 32-2 1h-5l-3-10-12-1-3 10H1l-1-1z" fill="#b02a26" />
            <path d="M16 10l5 9-9 2z" fill={c.dark} />
            <path d="M20 1l2 2 8 27-6-9-5-12z" fill="#c9352c" />
            <path d="M0 35l4-10 6-4-3 14-6 1zM24 26l7 7 1 2-2 1h-5z" fill="#d98a50" />
            <path d="M4 25l18-2 2 5-14-1z" fill="#7d2320" />
          </svg>
        </LogoButton>
        <HeaderRows>
          <TitleRow>
            <Quick>
              {["new", "open", "save", "saveas", "openm", "savem", "print"].map((n) => <IconButton key={n} aria-label={n}><Glyph name={n} /></IconButton>)}
              <IconButton aria-label="Annuler"><Glyph name="undo" /><Caret /></IconButton>
              <IconButton aria-label="Rétablir"><Glyph name="redo" /><Caret /></IconButton>
              <IconButton aria-label="Personnaliser"><Glyph name="more" /></IconButton>
            </Quick>
            <Title>{"Autodesk AutoCAD 2021    Cartouche PUEL.DWG"}</Title>
            <SearchArrow />
            <Search aria-label="Rechercher" placeholder="Entrez mot-clé ou expression" />
            <Account>
              <IconButton aria-label="Rechercher"><Glyph name="search" /></IconButton>
              <UserButton><Glyph name="user" />Caderix<Caret /></UserButton>
              <IconButton aria-label="Boutique"><Glyph name="cart" /></IconButton>
              <IconButton aria-label="Applications"><Glyph name="tri" /><Caret /></IconButton>
              <Rule />
              <IconButton aria-label="Aide"><HelpMark>?</HelpMark><Caret /></IconButton>
            </Account>
            <WindowButtons>
              {["min", "restore", "close"].map((n) => <IconButton key={n} aria-label={n}><Glyph name={n} /></IconButton>)}
            </WindowButtons>
          </TitleRow>
          <MenuRow>
            {["Fichier", "Edition", "Affichage", "Insertion", "Format", "Outils", "Dessin", "Cotation", "Modification", "Paramétrique", "Fenêtre", "?", "Express", "Express"].map((m, i) => (
              <MenuLink key={i} href="#">{m}</MenuLink>
            ))}
            <WindowButtons $inner>
              {["min", "restore", "close"].map((n) => <IconButton key={n} aria-label={n + " dessin"}><Glyph name={n} /></IconButton>)}
            </WindowButtons>
          </MenuRow>
        </HeaderRows>
      </Header>
      <RibbonTabs>
        {["Début", "Insertion", "Annoter", "Paramétrique", "Vue", "Gérer", "Sortie", "Compléments", "Collaborer", "Express Tools", "Applications associées", "Outils Express"].map((t, i) => (
          <RibbonTab key={t} $on={i === 0}>{t}</RibbonTab>
        ))}
        <Minimise aria-label="Réduire le ruban"><span><i /></span><Caret /></Minimise>
      </RibbonTabs>
      <Ribbon>
        <Panel title="Dessin" w={290}>
          <Big icon="ligne" lines={["Ligne"]} w={50} />
          <Big icon="polyligne" lines={["Polyligne"]} w={66} />
          <Big icon="cercle" lines={["Cercle"]} w={70} menu />
          <Big icon="arc" lines={["Arc"]} w={48} menu />
          <Tools pad={6} items={[{ icon: "rect", name: "Rectangle", menu: true }, { icon: "ellipse", name: "Ellipse", menu: true }, { icon: "hatch", name: "Hachures", menu: true }]} />
        </Panel>
        <Panel title="Modification" w={298} pad={7}>
          <Tools w={105} items={[{ icon: "move", label: "Déplacer" }, { icon: "copy", label: "Copier" }, { icon: "stretch", label: "Etirer" }]} />
          <Tools w={100} items={[{ icon: "rotate", label: "Rotation" }, { icon: "mirror", label: "Miroir" }, { icon: "scale", label: "Echelle" }]} />
          <Tools w={51} items={[{ icon: "trim", name: "Ajuster", menu: true }, { icon: "fillet", name: "Raccord", menu: true }, { icon: "array", name: "Réseau", menu: true }]} />
          <Tools items={[{ icon: "erase", name: "Effacer" }, { icon: "explode", name: "Décomposer" }, { icon: "offset", name: "Décaler" }]} />
        </Panel>
        <Panel title="Annotation" w={162} pad={7}>
          <Big icon="texte" lines={["Texte"]} w={54} menu />
          <Big icon="cote" lines={["Cote"]} w={54} />
          <Tools pad={3} items={[{ icon: "linear", name: "Linéaire", menu: true }, { icon: "leader", name: "Repère", menu: true }, { icon: "table", name: "Tableau" }]} />
        </Panel>
        <Panel title="Calques" w={341}>
          <Big icon="calques" lines={["Propriétés", "du calque"]} w={78} />
          <LayerArea>
            <Combo>
              <Glyph name="bulbBig" /><Glyph name="sun" /><Glyph name="unlock" /><Swatch />
              <select aria-label="Calque"><option>0</option></select>
              <Caret $wide />
            </Combo>
            <LayerGrid>
              {["lOff", "lIso", "lFreeze", "lLock", "lMake", "lOn", "lUniso", "lThaw", "lUnlock", "lMatch"].map((n) => <Tool key={n} aria-label={n}><Glyph name={n} /></Tool>)}
            </LayerGrid>
          </LayerArea>
        </Panel>
        <Panel title="Bloc" w={100}>
          <Big icon="inserer" lines={["Insérer"]} w={54} menu />
          <Tools pad={2} items={[{ icon: "blkNew", name: "Créer" }, { icon: "blkEdit", name: "Modifier" }, { icon: "blkAttr", name: "Attributs", menu: true }]} />
        </Panel>
        <Panel title="Propriétés" w={302} launch="far">
          <Big icon="copierProps" lines={["Copier", "les propriétés"]} w={104} />
          <Tools w={23} items={[{ icon: "wheel", name: "Couleur" }, { icon: "weights", name: "Epaisseur" }, { icon: "types", name: "Type de ligne" }]} />
          <PropCombos>
            <Combo><Swatch $framed /><select aria-label="Couleur"><option>DuCalque</option></select><Caret $wide /></Combo>
            <Combo><LineSample /><select aria-label="Epaisseur de ligne"><option>DuCalqu</option></select><Caret $wide /></Combo>
            <Combo><LineSample /><select aria-label="Type de ligne"><option>DuCal...</option></select><Caret $wide /></Combo>
          </PropCombos>
        </Panel>
        <Panel title="Groupes" w={98}>
          <Big icon="grouper" lines={["Grouper"]} w={65} />
          <Tools pad={4} items={[{ icon: "ungroup", name: "Dissocier" }, { icon: "grpEdit", name: "Modifier le groupe" }, { icon: "grpSel", name: "Sélection de groupe", on: true }]} />
        </Panel>
        <Panel title="Utilitaires" w={117}>
          <Big icon="mesurer" lines={["Mesurer"]} w={86} menu />
          <Tools items={[{ icon: "quick", name: "Sélection rapide" }, { icon: "selAll", name: "Tout sélectionner" }, { icon: "calc", name: "Calculatrice" }]} />
        </Panel>
        <Panel title="Presse-papiers" w={111} plain>
          <Big icon="coller" lines={["Coller"]} w={77} menu />
          <Tools items={[{ icon: "cut", name: "Couper" }, { icon: "copyClip", name: "Copier" }]} />
        </Panel>
        <Panel title="Vue" w={96} start launch="near">
          <Big icon="base" lines={["Base"]} w={68} menu low />
        </Panel>
      </Ribbon>
      <FileTabs>
        <FileTab label="Début" />
        <FileTab label="Dessin1*" closable />
        <FileTab label="Cartouche PUEL*" on closable />
        <AddTab aria-label="Nouveau dessin">
          <svg width="11" height="11" viewBox="0 0 11 11" aria-hidden="true"><path d="M5.500 0v11M0 5.500h11" stroke="#a9adb3" strokeWidth="2.400" /></svg>
        </AddTab>
      </FileTabs>
      <Canvas>
        <ViewLabel>[−][Haut][Filaire 2D]</ViewLabel>
        <TitleBlock>
          <LeftCells>
            <Cell $rule>
              <Caption>PROJET</Caption>
              <Value $size={37}>TITRE ligne 1</Value>
              <Value $size={37}>TITRE ligne 2</Value>
              <Value $plain>PU00-000</Value>
            </Cell>
            <Cell>
              <Caption>ADRESSE</Caption>
              <Value $gap={24}>COMMUNE</Value>
            </Cell>
          </LeftCells>
          <Revisions>
            <colgroup><col style={{ width: "14.300%" }} /><col style={{ width: "21.400%" }} /><col /></colgroup>
            <thead><tr><th colSpan={3}>LIBELLE DES MODIFICATIONS</th></tr></thead>
            <tbody>
              {revisions.map((r) => (
                <tr key={r[0]}>{r.map((v, i) => <td key={i}>{v}</td>)}</tr>
              ))}
            </tbody>
            <tfoot><tr><th>INDICE</th><th>DATE</th><th>LIBELLE DES MODIFICATIONS</th></tr></tfoot>
          </Revisions>
          <RightCells>
            <PlanName $span={6} $rule>NOM DU PLAN</PlanName>
            <Cell $span={3} $rule><Caption>PHASE</Caption><Value $gap={6}>EXE</Value></Cell>
            <Cell $span={3} $rule $divider><Caption>ECHELLE</Caption></Cell>
            <Cell $span={2}><Caption>DATE</Caption><Value $gap={6}>00/00/2000</Value></Cell>
            <Cell $span={2} $divider><Caption>DOCUMENT N°</Caption><Value $gap={6}>PL001</Value></Cell>
            <Cell $span={2} $divider><Caption>INDICE</Caption></Cell>
          </RightCells>
        </TitleBlock>
        <SheetEdge />
        <Crosshair width="97" height="97" viewBox="0 0 97 97" aria-hidden="true">
          <path d="M48.500 0v38M48.500 59v38M0 48.500h38M59 48.500h38M38.500 38.500h20v20h-20z" fill="none" stroke="#111" />
        </Crosshair>
        <ViewCube width="164" height="200" viewBox="0 8 164 200">
          <circle cx="82" cy="93" r="55" fill="none" stroke="#fcfcfc" strokeWidth="14" />
          <circle cx="82" cy="93" r="62" fill="none" stroke="#f9f9f9" />
          <circle cx="82" cy="93" r="48" fill="none" stroke="#fafafa" />
          <rect x="55.500" y="66.500" width="53" height="53" fill="#eeeeee" stroke="#9c9c9c" />
          <rect x="65" y="76" width="34" height="34" fill="#e1e2e7" />
          <text x="82" y="98" textAnchor="middle" fontFamily="Roboto Condensed, Liberation Sans, sans-serif" fontWeight="700" fontSize="14" fill="#8d8f93">HAUT</text>
          {compass.map(([l, x, y]) => (
            <text key={l} x={x} y={y + 8} textAnchor="middle" fontWeight="700" fontSize="21" fill="#e2e3e6" stroke="#a3a4a6" strokeWidth="1">{l}</text>
          ))}
          <rect x="55" y="184" width="54" height="19" rx="5" fill="#e9eaef" />
          <text x="59" y="198" fontFamily="Liberation Sans, sans-serif" fontSize="12" fill="#86888b">SCG</text>
          <path d="M93.500 190.500h9l-4.500 5z" fill="none" stroke="#b5b7bb" />
        </ViewCube>
        <Ucs width="100" height="102" viewBox="0 0 100 102">
          <path d="M16.500 24v62M16 85.500h63M11.500 80.500h11v11h-11z" fill="none" stroke="#111" />
          <text x="25.500" y="20" textAnchor="middle" fontFamily="Lato, sans-serif" fontWeight="300" fontSize="21" fill="#000">Y</text>
          <text x="90.500" y="85" textAnchor="middle" fontFamily="Lato, sans-serif" fontWeight="300" fontSize="21" fill="#000">X</text>
        </Ucs>
        <CommandLine>
          <CommandHandle>
            <svg width="6" height="22" viewBox="0 0 6 22" aria-hidden="true"><path d="M1 0v22M5 0v22" stroke="#ddd" strokeWidth="2" strokeDasharray="2 2" /></svg>
            <button aria-label="Fermer"><svg width="11" height="11" viewBox="0 0 11 11" aria-hidden="true"><path d="M1 1l9 9M10 1l-9 9" stroke="#ddd" strokeWidth="2.400" /></svg></button>
            <button aria-label="Personnaliser"><svg width="19" height="20" viewBox="0 0 19 20" aria-hidden="true"><path d="M1 18l9-9" stroke="#e8e8e4" strokeWidth="3.600" strokeLinecap="round" /><path d="M9 9c-1-4 1-8 6-8l-3 3 1 3 3 1 3-3c0 5-4 7-8 6z" fill="#e8e8e4" /></svg></button>
          </CommandHandle>
          <Prompt aria-label="Commandes récentes">
            <svg width="20" height="16" viewBox="0 0 20 16" aria-hidden="true"><rect x=".5" y=".5" width="19" height="15" fill="#eee" stroke="#888" /><path d="M0 0h20v4H0z" fill="#666" /><path d="M2 6.500l3 2.500-3 2.500M6 12h5" fill="none" stroke="#777" /></svg>
            <Caret $wide />
          </Prompt>
          <TextCaret />
          <input aria-label="Commande" />
          <History aria-label="Historique" />
        </CommandLine>
      </Canvas>
      <LayoutTabs>
        {["Objet", "Cartouche CDHA", "Cartouche HDC", "Cartouche Ci", "Cartouche A4", "Cartouche A3", "Cartouche A2", "Cartouche A1", "Cartouche A0"].map((t, i) => (
          <LayoutTab key={t} href="#" $on={i === 0}>{t}</LayoutTab>
        ))}
      </LayoutTabs>
    </Page>
  );
}
